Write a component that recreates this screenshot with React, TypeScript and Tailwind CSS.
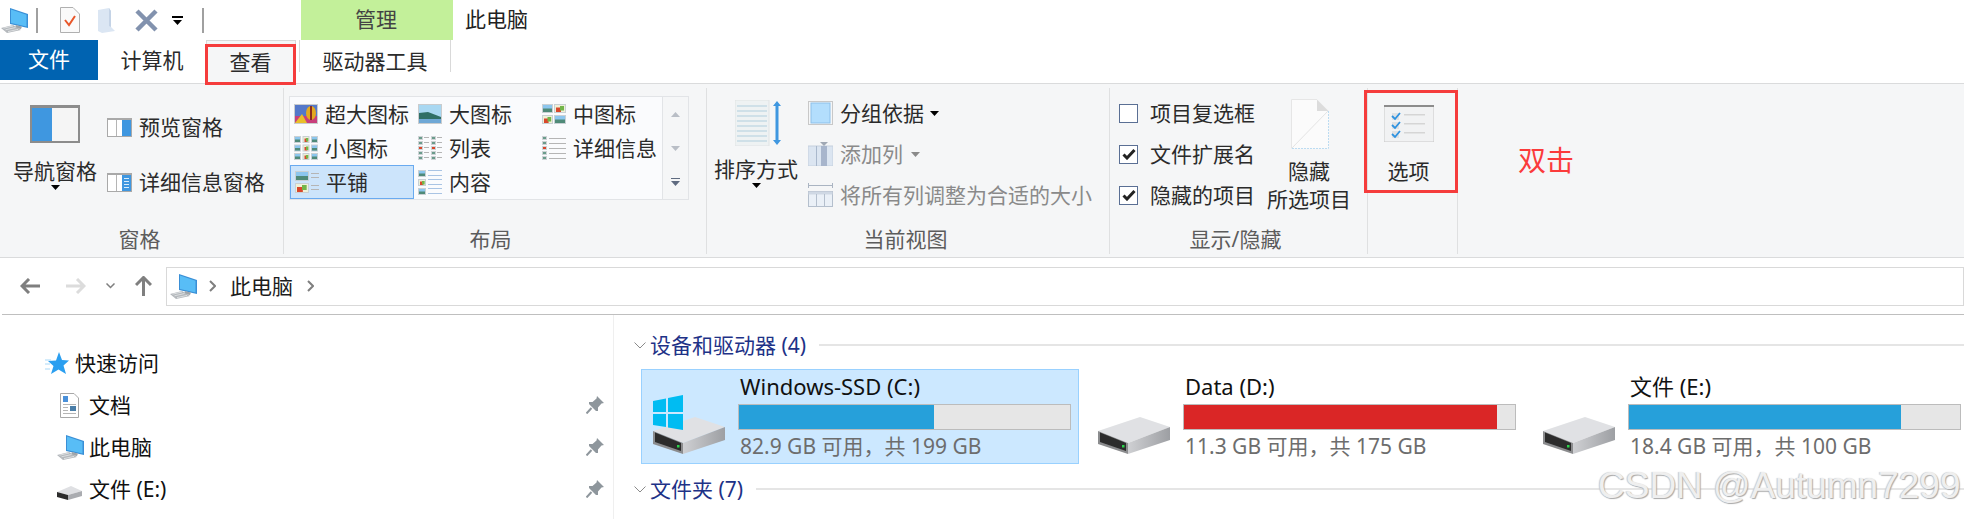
const PcIcon = ({ className }: { className?: string }) => (
  <svg viewBox="0 0 27 25" className={className}>
    <path d="M9 0 L27 6 V20 L9 16 Z" fill="#3a8fd6" />
    <path d="M10 1.5 L25.5 6.8 V18.6 L10 15 Z" fill="#58bdf6" />
    <path d="M15 17 L21 18.5 L20 21 L14 20 Z" fill="#9fa5aa" />
    <path d="M0 20 L12 17 L20 22 L6 25 Z" fill="#b4b8bc" />
    <path d="M2.5 20.2 L12 18 M4.5 21.8 L14.5 19.5 M7 23.6 L17 21.4" stroke="#e6e8ea" strokeWidth="0.8" />
  </svg>
)

const Caret = ({ className = "" }: { className?: string }) => (
  <svg viewBox="0 0 9 5" className={`w-[9px] h-[5px] ${className}`}>
    <path d="M0 0 H9 L4.5 5 Z" fill="currentColor" />
  </svg>
)

const Landscape = ({ x, y, w, h }: { x: number; y: number; w: number; h: number }) => (
  <g>
    <rect x={x} y={y} width={w} height={h} fill="#c9d0d4" />
    <rect x={x + 1} y={y + 1} width={w - 2} height={h - 2} fill="#8cc6ee" />
    <rect x={x + 1} y={y + h / 2} width={w - 2} height={h / 2 - 1} fill="#4f8a78" />
  </g>
)

const Flowers = ({ x, y, w, h }: { x: number; y: number; w: number; h: number }) => (
  <g>
    <rect x={x} y={y} width={w} height={h} fill="#c9d0d4" />
    <rect x={x + 1} y={y + 1} width={w - 2} height={h - 2} fill="#eef1d8" />
    <rect x={x + 2} y={y + h / 2 - 1} width={w / 2.4} height={h / 2} fill="#d9472b" />
    <rect x={x + w / 2} y={y + 2} width={w / 3} height={h / 2} fill="#72b54a" />
  </g>
)

const Lines = ({ x, ys, w, color = "#b5b5b5" }: { x: number; ys: number[]; w: number; color?: string }) => (
  <g>
    {ys.map(y => (
      <rect key={y} x={x} y={y} width={w} height={1} fill={color} />
    ))}
  </g>
)

const ThumbXl = () => (
  <svg viewBox="0 0 24 20" className="w-6 h-5">
    <rect width="24" height="20" fill="#c9ccce" />
    <rect x="1" y="1" width="22" height="18" fill="#5478c9" />
    <rect x="1" y="12" width="22" height="7" fill="#c83f7c" />
    <path d="M1 19 L8 10 L13 19 Z" fill="#e9bf2a" />
    <ellipse cx="17" cy="9" rx="5" ry="7" fill="#e4a91f" />
    <rect x="16" y="2" width="2" height="14" fill="#8a2c1f" />
  </svg>
)

const ThumbLg = () => (
  <svg viewBox="0 0 24 20" className="w-6 h-5">
    <rect width="24" height="20" fill="#c9ccce" />
    <rect x="1" y="1" width="22" height="18" fill="#a9d8f2" />
    <path d="M1 9 L10 8 L23 13 V19 H1 Z" fill="#2f6f66" />
    <rect x="1" y="15" width="22" height="4" fill="#6fa8d6" />
  </svg>
)

const ThumbMd = () => (
  <svg viewBox="0 0 24 20" className="w-6 h-5">
    <Landscape x={0} y={0} w={11} h={9} />
    <Flowers x={12} y={0} w={12} h={9} />
    <Flowers x={0} y={11} w={11} h={9} />
    <Landscape x={12} y={11} w={12} h={9} />
  </svg>
)

const ThumbSm = () => (
  <svg viewBox="0 0 24 24" className="w-6 h-6">
    {[0, 8.5, 17].map(y =>
      [0, 8.5, 17].map((x, i) =>
        i % 2 === 0 ? <Landscape key={`${x}-${y}`} x={x} y={y} w={7} h={7} /> : <Flowers key={`${x}-${y}`} x={x} y={y} w={7} h={7} />,
      ),
    )}
  </svg>
)

const MiniColumn = ({ x }: { x: number }) => (
  <g>
    {[0, 5, 10, 15, 20].map((y, i) => (
      <g key={y}>
        <rect x={x} y={y} width="5" height="4" fill="#cfd3d6" />
        <rect x={x + 1} y={y + 1} width="3" height="2" fill={i === 2 ? "#d9472b" : "#6b9c8c"} />
      </g>
    ))}
  </g>
)

const ThumbList = () => (
  <svg viewBox="0 0 24 24" className="w-6 h-6">
    <MiniColumn x={0} />
    <Lines x={6} ys={[1, 6, 11, 16, 21]} w={5} />
    <MiniColumn x={13} />
    <Lines x={19} ys={[1, 6, 11, 16, 21]} w={5} />
  </svg>
)

const ThumbDetails = () => (
  <svg viewBox="0 0 24 24" className="w-6 h-6">
    <MiniColumn x={0} />
    <Lines x={7} ys={[2, 7, 12, 17, 22]} w={17} />
  </svg>
)

const ThumbTiles = () => (
  <svg viewBox="0 0 24 24" className="w-6 h-6">
    <Landscape x={0} y={1} w={14} h={10} />
    <Flowers x={0} y={13} w={14} h={10} />
    <Lines x={16} ys={[3, 7, 15, 19]} w={8} />
  </svg>
)

const ThumbContent = () => (
  <svg viewBox="0 0 24 26" className="w-6 h-[26px]">
    <Landscape x={0} y={1} w={8} h={7} />
    <Flowers x={0} y={10} w={8} h={7} />
    <Landscape x={0} y={19} w={8} h={7} />
    <Lines x={10} ys={[1, 6, 10, 15, 19, 24]} w={14} color="#a9c4e4" />
  </svg>
)

const PaneIcon = ({ details }: { details?: boolean }) => (
  <svg viewBox="0 0 25 19" className="w-[25px] h-[19px]">
    <rect width="25" height="19" fill="#a9a9a9" />
    <rect x="1" y="2" width="23" height="16" fill="#fff" />
    <rect x="9" y="2" width="1" height="16" fill="#b5b5b5" />
    <rect x="15" y="2" width="9" height="16" fill="#3f97e0" />
    {details && <Lines x={17} ys={[5, 8, 11, 14]} w={5} color="#d8ecfb" />}
  </svg>
)

const Pin = () => (
  <svg viewBox="0 0 18 18" className="w-[18px] h-[18px]">
    <path d="M10.5 0.5 L17.5 7.5 L15 8 L11.5 12 L11.5 15.5 L9.5 15.5 L2.5 8.5 L2.5 6.5 L6 6.5 L10 3 Z" fill="#8e969c" transform="translate(0.5 -0.5)" />
    <path d="M5.5 12 L0.5 17.5" stroke="#8e969c" strokeWidth="2" />
  </svg>
)

const DriveIcon = ({ system }: { system?: boolean }) => (
  <svg viewBox="0 0 72 60" className="w-[72px] h-[60px] shrink-0">
    <defs>
      <linearGradient id="driveSide" x1="0" x2="1" y1="0" y2="0">
        <stop offset="0" stopColor="#cfd0d3" />
        <stop offset="1" stopColor="#9d9fa3" />
      </linearGradient>
    </defs>
    <path d="M42 22 L0 36 L30 48 L72 32 Z" fill="#e0e1e4" />
    <path d="M0 36 L30 48 V59 L0 49 Z" fill="#8b8c8e" />
    <path d="M2 37.5 L28 48 V56 L2 47 Z" fill="#2c2c2c" />
    <path d="M30 48 L72 32 V45 L30 59 Z" fill="url(#driveSide)" />
    <rect x="24" y="50" width="2.5" height="2.5" fill="#2bd24b" />
    {system && (
      <path d="M0 6 L13 3.5 V17 L0 17 Z M15 3 L30 0 V17 L15 17 Z M0 19 L13 19 V32 L0 30 Z M15 19 L30 19 V35 L15 32.5 Z" fill="#00bcf2" />
    )}
  </svg>
)

type Drive = { name: string; used: number; sub: string; color: string; selected?: boolean; system?: boolean }

const drives: Drive[] = [
  { name: "Windows-SSD (C:)", used: 59, sub: "82.9 GB 可用，共 199 GB", color: "bg-[#26a0da]", selected: true, system: true },
  { name: "Data (D:)", used: 94.6, sub: "11.3 GB 可用，共 175 GB", color: "bg-[#da2626]" },
  { name: "文件 (E:)", used: 82.2, sub: "18.4 GB 可用，共 100 GB", color: "bg-[#26a0da]" },
]

const GroupHeader = ({ title }: { title: string }) => (
  <div className="h-[30px] flex items-center text-[#1e3287]">
    <svg viewBox="0 0 12 7" className="w-[12px] h-[7px] shrink-0 mr-[4px]">
      <path d="M0.5 0.5 L6 6 L11.5 0.5" fill="none" stroke="#8a8a8a" />
    </svg>
    <span className="whitespace-nowrap">{title}</span>
    <div className="flex-1 h-[2px] bg-[#e5e5e5] ml-[13px]" />
  </div>
)

const galleryItems = [
  { label: "超大图标", icon: <ThumbXl /> },
  { label: "大图标", icon: <ThumbLg /> },
  { label: "中图标", icon: <ThumbMd /> },
  { label: "小图标", icon: <ThumbSm /> },
  { label: "列表", icon: <ThumbList /> },
  { label: "详细信息", icon: <ThumbDetails /> },
  { label: "平铺", icon: <ThumbTiles />, selected: true },
  { label: "内容", icon: <ThumbContent /> },
]

const Check = ({ checked }: { checked?: boolean }) => (
  <div className="w-[19px] h-[19px] border border-[#5a6f94] bg-white flex items-center justify-center shrink-0">
    {checked && (
      <svg viewBox="0 0 14 12" className="w-[14px] h-[12px]">
        <path d="M1.5 6.5 L5 10 L12.5 2" fill="none" stroke="#222" strokeWidth="3" />
      </svg>
    )}
  </div>
)

const GroupLabel = ({ text, className = "" }: { text: string; className?: string }) => (
  <div className={`h-[30px] flex items-center justify-center text-[#5c5c5c] leading-[30px] ${className}`}>{text}</div>
)

export default function App() {
  return (
    <div className="relative w-[1964px] h-[519px] overflow-hidden bg-white text-[21px] leading-[28px] text-[#2b2b2b] font-['Noto_Sans','Noto_Sans_CJK_SC',sans-serif]">
      {/* quick access row */}
      <div className="h-10 flex items-center">
        <PcIcon className="w-[27px] h-[25px] ml-[1px]" />
        <div className="w-[2px] h-[25px] bg-[#a0a0a0] ml-[8px]" />
        <svg viewBox="0 0 20 26" className="w-5 h-[26px] ml-[22px]">
          <path d="M0.5 0.5 H13 L19.5 7 V25.5 H0.5 Z" fill="#fafafa" stroke="#b0b0b0" />
          <path d="M5 13 L9 18 L15 9" fill="none" stroke="#e8572a" strokeWidth="2" />
        </svg>
        <svg viewBox="0 0 17 25" className="w-[17px] h-[25px] ml-[18px]">
          <path d="M0 2 L11 0 L13 3 V19 L17 23 L4 25 L0 23 Z" fill="#dbe6f3" />
          <path d="M11 0 L13 3 V19 L11 18 Z" fill="#c4d3e6" />
        </svg>
        <svg viewBox="0 0 23 23" className="w-[23px] h-[23px] ml-[20px]">
          <path d="M2 2 L21 21 M21 2 L2 21" stroke="#8292ae" strokeWidth="4.5" />
        </svg>
        <div className="ml-[14px] flex flex-col items-center gap-[2px] text-black">
          <div className="w-[11px] h-[2px] bg-black" />
          <Caret />
        </div>
        <div className="w-[2px] h-[25px] bg-[#a0a0a0] ml-[19px]" />
        <div className="ml-[97px] w-[152px] h-10 pb-[2px] pr-[2px] bg-[#c3f09a] flex items-center justify-center text-[#444]">管理</div>
        <div className="ml-[12px] pb-[2px] text-[#222]">此电脑</div>
      </div>

      {/* tabs */}
      <div className="h-[44px] flex items-start border-b border-[#dadbdc]">
        <div className="w-[98px] h-10 pb-[2px] bg-[#0063b1] text-white flex items-center justify-center">文件</div>
        <div className="w-[108px] h-10 pb-[1px] flex items-center justify-center">计算机</div>
        <div className="relative w-[90px] h-[44px] bg-[#f5f6f7] border-t border-x border-[#d9d9d9] flex items-center justify-center pb-[1px] pr-[1px]">
          查看
          <div className="absolute left-[-2px] top-[3px] w-[91px] h-[41px] border-[3px] border-[#f53c3c]" />
        </div>
        <div className="ml-[3px] w-[152px] h-8 border-x border-[#d9d9d9] flex items-center justify-center pt-[10px]">驱动器工具</div>
      </div>

      {/* ribbon */}
      <div className="h-[174px] bg-[#f5f6f7] border-b border-[#dadbdc] pt-1 pb-[3px] flex">
        <div className="w-[284px] shrink-0 border-r border-[#dfe0e1] flex flex-col">
          <div className="flex-1 flex">
            <div className="ml-[13px] w-[84px] flex flex-col items-center pt-[17px]">
              <svg viewBox="0 0 50 38" className="w-[50px] h-[38px]">
                <rect width="50" height="38" fill="#8c8c8c" />
                <rect x="2" y="3" width="46" height="33" fill="#f5f5f5" />
                <rect x="2" y="3" width="20" height="33" fill="#3f97e0" />
              </svg>
              <div className="mt-[14px] whitespace-nowrap">导航窗格</div>
              <Caret className="text-black" />
            </div>
            <div className="ml-[10px] pt-[25px] flex flex-col gap-[27px]">
              <div className="flex items-center gap-[7px]"><PaneIcon />预览窗格</div>
              <div className="flex items-center gap-[7px]"><PaneIcon details />详细信息窗格</div>
            </div>
          </div>
          <GroupLabel text="窗格" className="pr-[4px]" />
        </div>

        <div className="w-[423px] shrink-0 border-r border-[#dfe0e1] flex flex-col">
          <div className="flex-1 flex pl-[5px] pt-2">
            <div className="w-[374px] h-[104px] bg-[#fafbfd] border border-[#e2e4e7] grid grid-cols-[124px_124px_124px] grid-rows-[34px_34px_34px]">
              {galleryItems.map(item => (
                <div
                  key={item.label}
                  className={`flex items-center pl-[4px] whitespace-nowrap ${item.selected ? "bg-[#cce4fb] border border-[#69aaf0]" : ""}`}
                >
                  <div className="w-6 mr-[7px] flex justify-center shrink-0">{item.icon}</div>
                  {item.label}
                </div>
              ))}
            </div>
            <div className="w-[26px] h-[104px] border border-l-0 border-[#e2e4e7] flex flex-col text-[#b9bec6]">
              <div className="flex-1 flex items-center justify-center">
                <Caret className="rotate-180" />
              </div>
              <div className="flex-1 flex items-center justify-center">
                <Caret />
              </div>
              <div className="flex-1 flex flex-col items-center justify-center gap-[2px] text-[#5f6b80]">
                <div className="w-[9px] h-[1px] bg-[#5f6b80]" />
                <Caret />
              </div>
            </div>
          </div>
          <GroupLabel text="布局" className="pr-[9px]" />
        </div>

        <div className="w-[403px] shrink-0 border-r border-[#dfe0e1] flex flex-col">
          <div className="flex-1 flex">
            <div className="ml-[7px] w-[84px] flex flex-col items-center pt-3">
              <svg viewBox="0 0 50 46" className="w-[50px] h-[46px] ml-[7px]">
                <rect x="0" y="0" width="34" height="46" fill="#eef2f3" stroke="#e0e3e4" />
                {[5, 10, 15, 20, 25, 30, 35, 40].map(y => (
                  <rect key={y} x="2" y={y} width="30" height="2" fill="#cfe0e8" />
                ))}
                <path d="M42 1 L46 6 H43.5 V40 H46 L42 45 L38 40 H40.5 V6 H38 Z" fill="#3f97e0" />
              </svg>
              <div className="mt-[9px] whitespace-nowrap">排序方式</div>
              <Caret className="text-black" />
            </div>
            <div className="ml-[10px] pt-[11px] flex flex-col gap-[13px]">
              <div className="h-7 flex items-center">
                <svg viewBox="0 0 25 24" className="w-[25px] h-6 mr-[7px]">
                  <rect x="0.5" y="0.5" width="24" height="23" fill="none" stroke="#c8c8c8" />
                  <rect x="3" y="2" width="19" height="20" fill="#b3defd" stroke="#8dc0ea" />
                </svg>
                分组依据
                <Caret className="ml-[6px] text-black" />
              </div>
              <div className="h-7 flex items-center text-[#8a8a8a]">
                <svg viewBox="0 0 25 24" className="w-[25px] h-6 mr-[7px]">
                  <rect x="0" y="4" width="25" height="20" fill="#dbe5f1" stroke="#c5d0de" />
                  <rect x="8" y="4" width="1" height="20" fill="#a9b8cc" />
                  <rect x="13" y="4" width="6" height="20" fill="#a7b5cc" />
                  <path d="M12 0 H20 L16 4 Z" fill="#a0a8b4" />
                </svg>
                添加列
                <Caret className="ml-[8px] text-[#8a8a8a]" />
              </div>
              <div className="h-7 flex items-center text-[#8a8a8a] whitespace-nowrap">
                <svg viewBox="0 0 25 24" className="w-[25px] h-6 mr-[7px]">
                  <path d="M0 2.5 H25 M0.5 0 V5 M24.5 0 V5" stroke="#aab4c2" />
                  <rect x="0.5" y="8.5" width="24" height="15" fill="#eaf0f7" stroke="#b4bfcd" />
                  <rect x="0.5" y="8.5" width="24" height="3" fill="#cfd8e4" />
                  <path d="M8.5 11 V24 M16.5 11 V24" stroke="#b4bfcd" />
                </svg>
                将所有列调整为合适的大小
              </div>
            </div>
          </div>
          <GroupLabel text="当前视图" className="pr-[5px]" />
        </div>

        <div className="w-[258px] shrink-0 border-r border-[#dfe0e1] flex flex-col">
          <div className="flex-1 flex">
            <div className="ml-[9px] pt-[11px] flex flex-col gap-[13px]">
              <div className="h-7 flex items-center gap-[12px] whitespace-nowrap"><Check />项目复选框</div>
              <div className="h-7 flex items-center gap-[12px] whitespace-nowrap"><Check checked />文件扩展名</div>
              <div className="h-7 flex items-center gap-[12px] whitespace-nowrap"><Check checked />隐藏的项目</div>
            </div>
            <div className="ml-[13px] flex flex-col items-center pt-[11px] w-[82px]">
              <svg viewBox="0 0 38 50" className="w-[38px] h-[50px] ml-[1px]">
                <path d="M0.5 0.5 H26 L37.5 12 V49.5 H0.5 Z" fill="#fbfbfb" />
                <path d="M26 0.5 L37.5 12 H26 Z" fill="#dcdcdc" />
                <path d="M0.5 0.5 H26 M0.5 0.5 V49.5" stroke="#e6e6e6" fill="none" />
                <path d="M37.5 12 V49.5 H0.5" stroke="#bcdcf2" strokeDasharray="2 1" fill="none" />
                <path d="M1 49 L37 12" stroke="#e4e4e4" />
              </svg>
              <div className="mt-[8px]">隐藏</div>
              <div className="whitespace-nowrap">所选项目</div>
            </div>
          </div>
          <GroupLabel text="显示/隐藏" className="pr-[6px]" />
        </div>

        <div className="relative w-[90px] shrink-0 border-r border-[#dfe0e1] flex flex-col items-center pr-[8px] pt-[17px]">
          <svg viewBox="0 0 50 37" className="w-[50px] h-[37px]">
            <rect width="50" height="37" fill="#f1f2f3" stroke="#c9c9c9" />
            <rect width="50" height="2" fill="#8c8c8c" />
            {[8, 17, 26].map(y => (
              <g key={y}>
                <rect x="8" y={y} width="7" height="7" fill="#dfe1e3" />
                <path d={`M8 ${y + 3} L11 ${y + 6} L16 ${y}`} fill="none" stroke="#2e92e0" strokeWidth="1.8" />
                <rect x="20" y={y + 1} width="21" height="1.5" fill="#d5d5d5" />
              </g>
            ))}
          </svg>
          <div className="mt-[15px]">选项</div>
          <div className="absolute left-[-4px] top-[2px] w-[94px] h-[103px] border-[3px] border-[#f53c3c]" />
        </div>

        <div className="pl-[60px] pt-[53px] text-[28px] leading-[38px] text-[#fb3b3b]">双击</div>
      </div>

      {/* address bar */}
      <div className="h-[57px] flex items-center border-b border-[#bfbfbf] ml-[2px]">
        <svg viewBox="0 0 20 16" className="w-5 h-4 ml-[18px]">
          <path d="M9 1 L2 8 L9 15 M2 8 H20" fill="none" stroke="#7f7f7f" strokeWidth="3" />
        </svg>
        <svg viewBox="0 0 20 16" className="w-5 h-4 ml-[26px]">
          <path d="M11 1 L18 8 L11 15 M18 8 H0" fill="none" stroke="#dcdcdc" strokeWidth="3" />
        </svg>
        <svg viewBox="0 0 9 6" className="w-[9px] h-[6px] ml-[20px]">
          <path d="M0.5 0.5 L4.5 4.5 L8.5 0.5" fill="none" stroke="#7f7f7f" strokeWidth="1.5" />
        </svg>
        <svg viewBox="0 0 17 20" className="w-[17px] h-5 ml-[20px]">
          <path d="M1 9 L8.5 1.5 L16 9 M8.5 2 V20" fill="none" stroke="#7f7f7f" strokeWidth="3" />
        </svg>
        <div className="ml-[14px] flex-1 h-[39px] border border-[#d9d9d9] flex items-center">
          <PcIcon className="w-[27px] h-[25px] ml-[3px]" />
          <svg viewBox="0 0 7 12" className="w-[7px] h-3 ml-[12px]">
            <path d="M1 1 L6 6 L1 11" fill="none" stroke="#7f7f7f" strokeWidth="2" />
          </svg>
          <span className="ml-[14px] text-[#1c1c1c]">此电脑</span>
          <svg viewBox="0 0 7 12" className="w-[7px] h-3 ml-[14px]">
            <path d="M1 1 L6 6 L1 11" fill="none" stroke="#7f7f7f" strokeWidth="2" />
          </svg>
        </div>
      </div>

      {/* main */}
      <div className="flex h-[204px]">
        <div className="w-[614px] shrink-0 border-r border-[#efefef] pt-[27px] text-[#111]">
          <div className="h-[42px] flex items-center pl-[45px]">
            <svg viewBox="0 0 24 24" className="w-6 h-6 mr-[6px]">
              <path d="M14 1 L17 9 L24 9.5 L18.5 14.5 L21 23 L13.5 18.5 L6 23 L8.5 15 L3 10 L11 9.5 Z" fill="#2b9ff0" />
              <path d="M0 9 H6 M0 13 H5 M0 18 H5" stroke="#a9d8f7" />
            </svg>
            快速访问
          </div>
          <div className="h-[42px] flex items-center pl-[60px]">
            <svg viewBox="0 0 19 25" className="w-[19px] h-[25px] mr-[10px]">
              <path d="M0.5 0.5 H14 L18.5 5 V24.5 H0.5 Z" fill="#fff" stroke="#a8a8a8" />
              <rect x="3" y="3" width="5" height="6" fill="#4a90d9" />
              <rect x="10" y="13" width="6" height="5" fill="#4a7ea8" />
              <path d="M3 11.5 H16 M3 14.5 H8 M3 17.5 H8 M3 20.5 H16" stroke="#b5b5b5" />
            </svg>
            <span>文档</span>
            <div className="ml-auto mr-[9px]"><Pin /></div>
          </div>
          <div className="h-[42px] flex items-center pl-[57px]">
            <PcIcon className="w-[27px] h-[25px] mr-[5px]" />
            <span>此电脑</span>
            <div className="ml-auto mr-[9px]"><Pin /></div>
          </div>
          <div className="h-[42px] flex items-center pl-[57px]">
            <svg viewBox="0 0 25 14" className="w-[25px] h-[14px] mr-[7px] mt-[8px]">
              <path d="M14 0 L0 6 L11 9 L25 5 Z" fill="#dfe0e3" />
              <path d="M0 6 L11 9 V14 L0 11 Z" fill="#2c2c2c" />
              <path d="M11 9 L25 5 V10 L11 14 Z" fill="#aaacb0" />
            </svg>
            <span>文件 (E:)</span>
            <div className="ml-auto mr-[9px]"><Pin /></div>
          </div>
        </div>

        <div className="flex-1 min-w-0 pt-[15px] pl-[20px]">
          <GroupHeader title="设备和驱动器 (4)" />
          <div className="flex gap-[7px] mt-[9px] ml-[7px]">
            {drives.map(d => (
              <div
                key={d.name}
                className={`w-[438px] h-[95px] shrink-0 flex border pl-[11px] ${d.selected ? "bg-[#cce8ff] border-[#99d1ff]" : "border-transparent"}`}
              >
                <div className="pt-[25px] shrink-0"><DriveIcon system={d.system} /></div>
                <div className="ml-[13px] pt-[2px]">
                  <div className="pl-[2px] h-[30px] text-[22px] text-[#111] whitespace-nowrap">{d.name}</div>
                  <div className="w-[333px] h-[26px] mt-[2px] bg-[#e6e6e6] border border-[#bcbcbc]">
                    <div className={`h-full ${d.color}`} style={{ width: `${d.used}%` }} />
                  </div>
                  <div className="pl-[2px] h-7 mt-[2px] text-[#6d6d6d] whitespace-nowrap">{d.sub}</div>
                </div>
              </div>
            ))}
          </div>
          <div className="mt-[10px]">
            <GroupHeader title="文件夹 (7)" />
          </div>
        </div>
      </div>

      {/* csdn watermark */}
      <div className="absolute left-[1598px] top-[465px] text-[37px] leading-[42px] whitespace-nowrap text-[#efefef] font-['Liberation_Sans',sans-serif] [text-shadow:1px_1px_1px_#a8a8a8,-1px_0_1px_#c8c8c8]">
        CSDN @Autumn7299
      </div>
    </div>
  )
}
